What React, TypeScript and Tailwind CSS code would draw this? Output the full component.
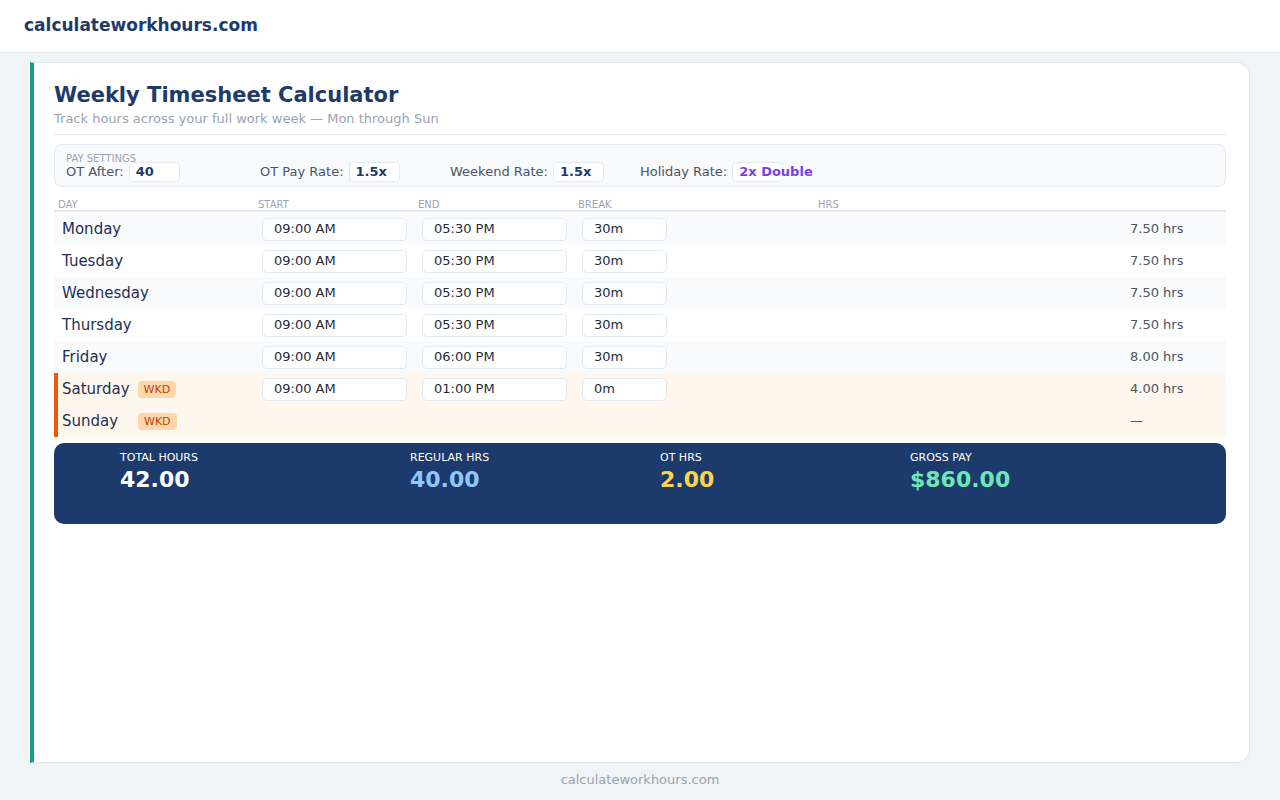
const rows = [
  { d: "Monday", s: "09:00 AM", e: "05:30 PM", b: "30m", h: "7.50 hrs" },
  { d: "Tuesday", s: "09:00 AM", e: "05:30 PM", b: "30m", h: "7.50 hrs" },
  { d: "Wednesday", s: "09:00 AM", e: "05:30 PM", b: "30m", h: "7.50 hrs" },
  { d: "Thursday", s: "09:00 AM", e: "05:30 PM", b: "30m", h: "7.50 hrs" },
  { d: "Friday", s: "09:00 AM", e: "06:00 PM", b: "30m", h: "8.00 hrs" },
  { d: "Saturday", s: "09:00 AM", e: "01:00 PM", b: "0m", h: "4.00 hrs", w: true },
  { d: "Sunday", s: "", e: "", b: "", h: "—", w: true },
];

function Box({ v, w }: { v: string; w: string }) {
  return (
    <div className={`h-[23px] ${w} bg-white border border-[#e2e8f0] rounded-[5px] px-[11px] flex items-center text-[13px] text-[#1f2937]`}>{v}</div>
  );
}

export default function App() {
  return (
    <div className="min-h-[800px] bg-[#f0f4f7] flex flex-col" style={{ fontFamily: '"DejaVu Sans", sans-serif' }}>
      <div className="h-[53px] bg-white border-b border-[#e2e8f0] flex items-center px-6">
        <div className="text-[17px] font-bold text-[#1e3a6b]">calculateworkhours.com</div>
      </div>
      <div className="mx-[30px] mt-[9px] h-[701px] bg-white border border-[#e2e8f0] border-l-4 border-l-[#14a08c] rounded-r-[14px] pl-5 pr-[23px] pt-[18px]">
        <div className="text-[21px] font-bold text-[#1e3a6b] leading-[28px]">Weekly Timesheet Calculator</div>
        <div className="text-[13px] text-[#9ca3af] leading-[18px] mt-[1px]">Track hours across your full work week — Mon through Sun</div>
        <div className="border-t border-[#e2e8f0] mt-[6px]" />
        <div className="mt-[9px] h-[43px] bg-[#f8fafc] border border-[#e2e8f0] rounded-[8px] px-[11px] pt-[8px] relative">
          <div className="text-[10px] text-[#9ca3af] leading-[11px] uppercase">Pay Settings</div>
          <div className="flex text-[13px] text-[#4b5563] -mt-[2px]">
            {[
              ["OT After:", "40", "w-[194px]", "w-[51px]", "text-[#1e3a6b]"],
              ["OT Pay Rate:", "1.5x", "w-[190px]", "w-[51px]", "text-[#1e3a6b]"],
              ["Weekend Rate:", "1.5x", "w-[190px]", "w-[51px]", "text-[#1e3a6b]"],
              ["Holiday Rate:", "2x Double", "", "w-[51px]", "text-[#7c3aed]"],
            ].map(([l, v, w, iw, c]) => (
              <div key={l} className={`flex items-center ${w}`}>
                <span>{l}</span>
                <div className={`ml-[5px] h-[20px] ${iw} bg-white border border-[#e2e8f0] rounded-[4px] px-[6px] flex items-center font-bold whitespace-nowrap ${c}`}>{v}</div>
              </div>
            ))}
          </div>
        </div>
        <div className="mt-[10px] grid grid-cols-[200px_160px_160px_240px_308px_1fr] text-[10px] text-[#9ca3af] uppercase h-[15px] border-b-2 border-[#e5e7eb] px-1">
          <div>Day</div><div>Start</div><div>End</div><div>Break</div><div>Hrs</div><div />
        </div>
        <div className="mt-[1px]">
          {rows.map((r, i) => (
            <div key={r.d} className={`h-[32px] grid grid-cols-[204px_160px_160px_240px_308px_1fr] items-center ${r.w ? "bg-[#fff7ed] border-l-4 border-l-[#ea580c]" : i % 2 === 0 ? "bg-[#f8fafc] border-l-4 border-l-transparent" : "bg-white border-l-4 border-l-transparent"}`}>
              <div className="flex items-center pl-1 text-[15px] text-[#1e2f55]">
                <span className={r.d === "Sunday" ? "w-[76px]" : ""}>{r.d}</span>
                {r.w && <span className={`${r.d === "Saturday" ? "ml-2" : ""} bg-[#fed7aa] text-[#c2410c] text-[11px] rounded-[4px] px-[6px] leading-[17px]`}>WKD</span>}
              </div>
              <div>{r.s && <Box v={r.s} w="w-[145px]" />}</div>
              <div>{r.e && <Box v={r.e} w="w-[145px]" />}</div>
              <div>{r.b && <Box v={r.b} w="w-[85px]" />}</div>
              <div />
              <div className="text-[13px] text-[#4b5563]">{r.h}</div>
            </div>
          ))}
        </div>
        <div className="mt-[6px] h-[81px] bg-[#1c3a6b] rounded-[10px] pl-[66px] pt-[8px] flex">
          {[
            ["Total Hours", "42.00", "text-white", "w-[290px]"],
            ["Regular Hrs", "40.00", "text-[#93c5fd]", "w-[250px]"],
            ["OT Hrs", "2.00", "text-[#fcd34d]", "w-[250px]"],
            ["Gross Pay", "$860.00", "text-[#6ee7b7]", ""],
          ].map(([l, v, c, w]) => (
            <div key={l} className={w}>
              <div className="text-[11px] text-white uppercase leading-[14px]">{l}</div>
              <div className={`text-[22px] font-bold leading-[30px] ${c}`}>{v}</div>
            </div>
          ))}
        </div>
      </div>
      <div className="text-center text-[13px] text-[#9ca3af] mt-[7px]">calculateworkhours.com</div>
    </div>
  );
}
